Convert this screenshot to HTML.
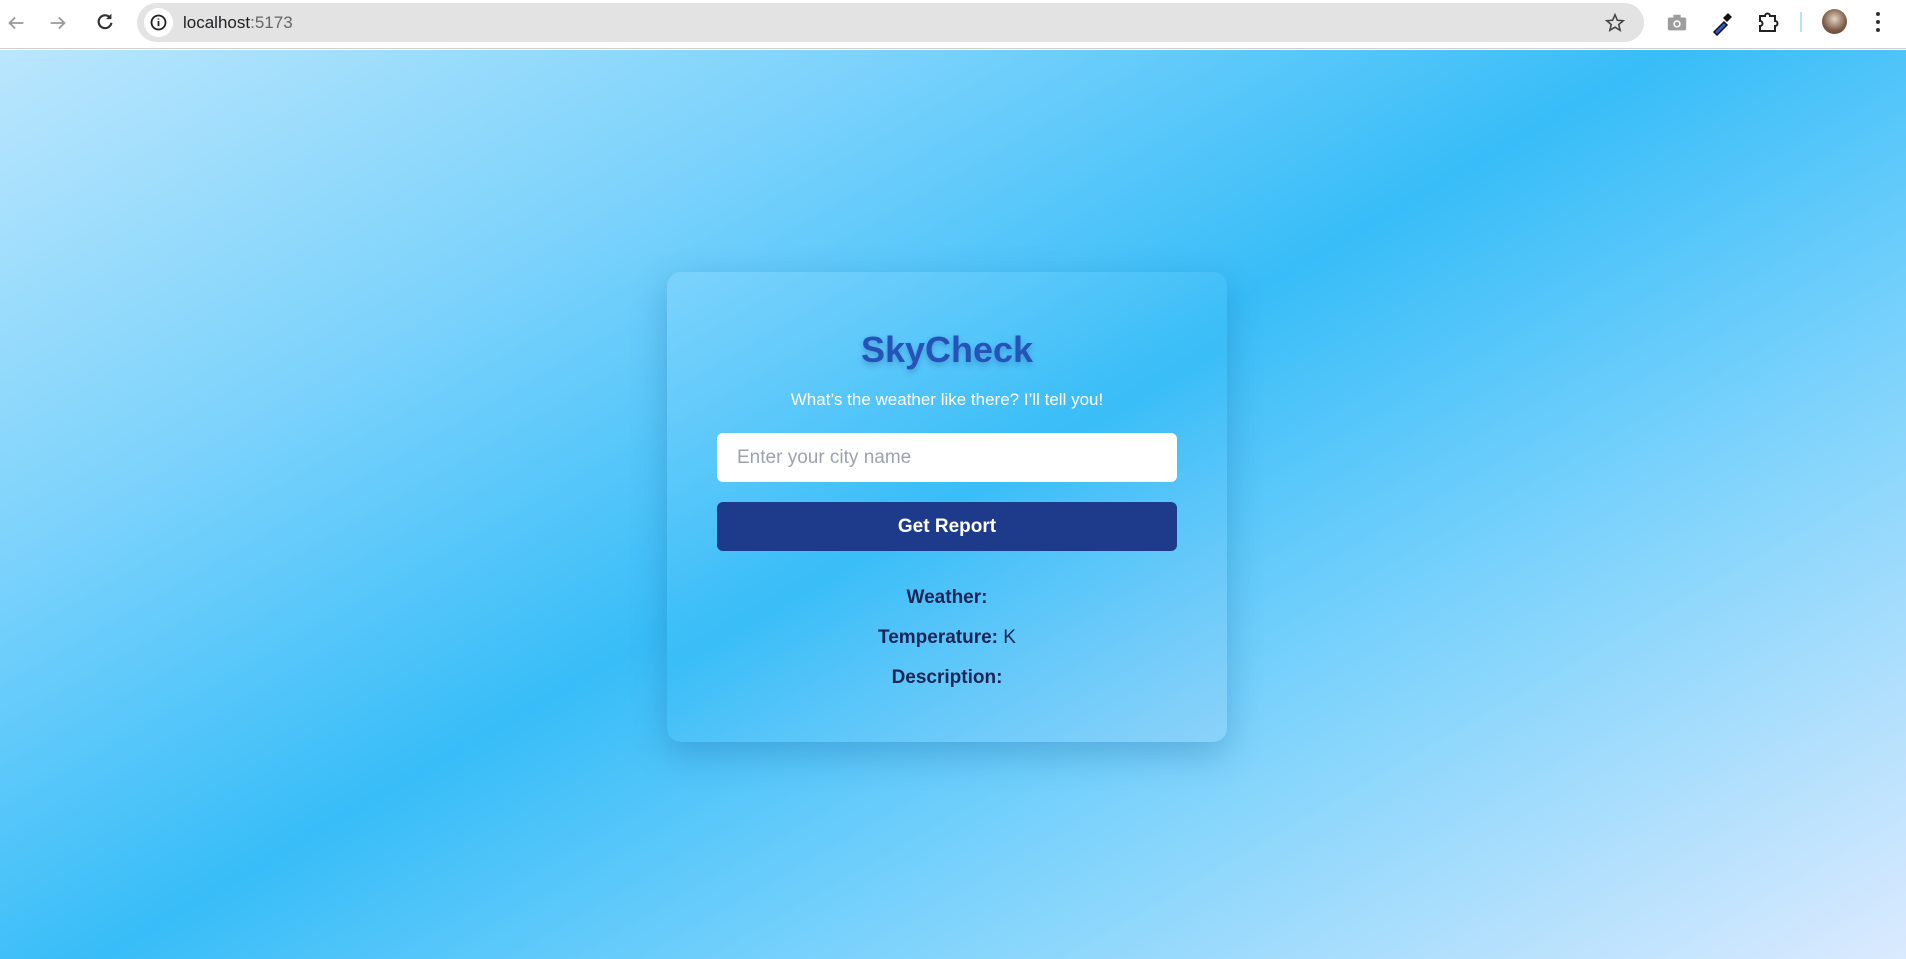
<!DOCTYPE html>
<html><head><meta charset="utf-8"><style>
*{margin:0;padding:0;box-sizing:border-box}
body{width:1906px;height:959px;overflow:hidden;font-family:"Liberation Sans",sans-serif;background:#fff}
.bar{height:49px;background:#fff;border-bottom:1px solid #d0d0d0;position:relative}
.url{position:absolute;left:137px;top:3px;width:1507px;height:39px;background:#e3e3e3;border-radius:20px}
.url .i{position:absolute;left:7px;top:5px;width:29px;height:29px;border-radius:50%;background:#fff;text-align:center}
.url span.t{position:absolute;left:46px;top:10px;font-size:17px;color:#202124}
.page{position:absolute;top:50px;left:0;width:1906px;height:909px;background:linear-gradient(150deg,#bae6fd 0%,#7dd3fc 25%,#38bdf8 48%,#7dd3fc 70%,#dbeafe 100%)}
.card{position:absolute;left:667px;top:222px;width:560px;height:470px;border-radius:14px;background:linear-gradient(150deg,rgba(125,211,252,.9),rgba(56,189,248,.7) 50%,rgba(140,210,250,.9));box-shadow:0 12px 35px rgba(20,90,150,.3);text-align:center}
h1{position:absolute;top:57px;width:100%;font-size:36px;color:#2553b8;font-weight:bold;text-shadow:0 3px 6px rgba(30,60,140,.3)}
.sub{position:absolute;top:118px;width:100%;font-size:17px;color:#fff}
.in{position:absolute;left:50px;top:161px;width:460px;height:49px;background:#fff;border-radius:6px;text-align:left;padding:14px 20px;font-size:19px;color:#9ca3af}
.btn{position:absolute;left:50px;top:230px;width:460px;height:49px;background:#1e3a8a;border-radius:6px;color:#fff;font-weight:bold;font-size:19px;line-height:49px}
.r{position:absolute;width:100%;font-size:19px;color:#1a2456;font-weight:bold}
.r span{font-weight:normal}
</style></head><body>
<div class="bar">
<svg style="position:absolute;left:5px;top:12px" width="22" height="22" viewBox="0 0 24 24"><path d="M20 12H5M11 6l-6 6 6 6" stroke="#9a9a9a" stroke-width="2" fill="none"/></svg>
<svg style="position:absolute;left:47px;top:12px" width="22" height="22" viewBox="0 0 24 24"><path d="M4 12h15M13 6l6 6-6 6" stroke="#9a9a9a" stroke-width="2" fill="none"/></svg>
<svg style="position:absolute;left:94px;top:10px" width="22" height="22" viewBox="0 0 24 24"><path d="M18 9A7 7 0 1 0 19 14" stroke="#333" stroke-width="2.4" fill="none"/><path d="M19 4v6h-6z" fill="#333"/></svg>
<div class="url"><div class="i"><svg width="29" height="29" viewBox="0 0 29 29"><circle cx="14.5" cy="14.5" r="7" stroke="#222" stroke-width="1.8" fill="none"/><path d="M14.5 13v5M14.5 10.5v1" stroke="#222" stroke-width="1.8"/></svg></div><span class="t">localhost<span style="color:#666">:5173</span></span>
<svg style="position:absolute;right:18px;top:9px" width="22" height="22" viewBox="0 0 24 24"><path d="M12 3l2.6 6 6.4.5-4.9 4.2 1.5 6.3L12 16.6 6.4 20l1.5-6.3L3 9.5 9.4 9z" stroke="#444" stroke-width="1.7" fill="none"/></svg></div>
<svg style="position:absolute;left:1666px;top:12px" width="22" height="22" viewBox="0 0 24 24"><rect x="2" y="6" width="20" height="14" rx="2" fill="#9e9e9e"/><rect x="8" y="3" width="8" height="4" fill="#9e9e9e"/><circle cx="12" cy="13" r="4" fill="#fff"/><circle cx="12" cy="13" r="2.4" fill="#9e9e9e"/></svg>
<svg style="position:absolute;left:1710px;top:10px" width="24" height="26" viewBox="0 0 24 26"><path d="M4 22l10-10 3 3-10 10z" fill="#2a5bd7" stroke="#111" stroke-width="1.5"/><path d="M13 8l5-5 4 4-5 5z" fill="#111"/></svg>
<svg style="position:absolute;left:1756px;top:10px" width="24" height="26" viewBox="0 0 24 24"><path d="M4 5h5a2.5 2.5 0 0 1 5 0h5v5a2.5 2.5 0 0 1 0 5v5H4v-5a2.5 2.5 0 0 0 0-5z" stroke="#222" stroke-width="2" fill="none"/></svg>
<div style="position:absolute;left:1800px;top:12px;width:2px;height:20px;background:#b7e3f5"></div>
<div style="position:absolute;left:1822px;top:9px;width:25px;height:25px;border-radius:50%;background:radial-gradient(circle at 50% 40%,#e5d5c5,#7a5a45 60%,#5a3a2a)"></div>
<svg style="position:absolute;left:1870px;top:10px" width="16" height="24" viewBox="0 0 16 24"><circle cx="8" cy="4" r="2" fill="#333"/><circle cx="8" cy="12" r="2" fill="#333"/><circle cx="8" cy="20" r="2" fill="#333"/></svg>
</div>
<div class="page">
<div class="card">
<h1>SkyCheck</h1>
<div class="sub">What’s the weather like there? I’ll tell you!</div>
<div class="in">Enter your city name</div>
<div class="btn">Get Report</div>
<div class="r" style="top:315px">Weather: <span></span></div>
<div class="r" style="top:355px">Temperature: <span>K</span></div>
<div class="r" style="top:395px">Description: <span></span></div>
</div>
</div>
</body></html>
